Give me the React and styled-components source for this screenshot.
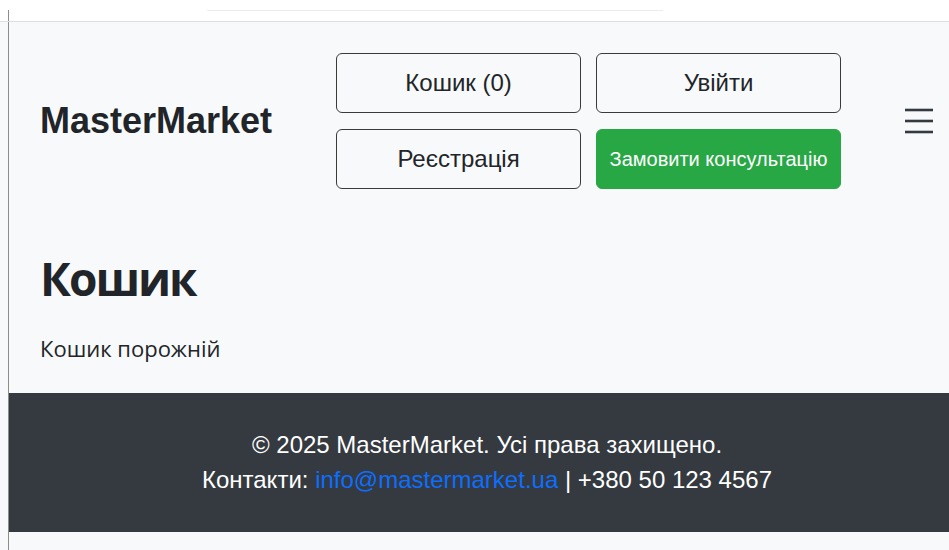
import React from 'react';
import styled, { createGlobalStyle } from 'styled-components';

const GlobalStyle = createGlobalStyle`
  html, body {
    margin: 0;
    padding: 0;
    background: #f8f9fa;
  }
  * {
    box-sizing: border-box;
  }
`;

const Page = styled.div`
  display: flex;
  flex-direction: column;
  min-height: 550px;
  background: #f8f9fa;
`;

const TopBand = styled.div`
  display: flex;
  align-items: flex-start;
  flex: none;
  height: 22px;
  padding-top: 10px;
  background: #fff;
  border-bottom: 1px solid #dcdfe2;
`;

const Edge = styled.div`
  width: 1px;
  height: 11px;
  margin-left: 8px;
  background: #8d8d8d;
`;

const FaintRule = styled.div`
  width: 456px;
  height: 1px;
  margin-left: 198px;
  background: #ececee;
`;

const Frame = styled.div`
  flex: 1;
  margin-left: 8px;
  border-left: 1px solid #8d8d8d;
  padding-bottom: 18px;
`;

const Header = styled.header`
  display: flex;
  align-items: center;
  justify-content: space-between;
  padding: 31px 16px 0 31px;
`;

const Logo = styled.div`
  font-family: "Liberation Sans", Arial, sans-serif;
  font-weight: 700;
  font-size: 36px;
  color: #212529;
`;

const ButtonGrid = styled.div`
  display: grid;
  grid-template-columns: 245px 245px;
  grid-auto-rows: 60px;
  column-gap: 15px;
  row-gap: 16px;
`;

const NavButton = styled.button`
  display: flex;
  align-items: center;
  justify-content: center;
  padding: 0;
  font-family: "Liberation Sans", Arial, sans-serif;
  font-size: ${p => (p.$accent ? '20px' : '24px')};
  color: ${p => (p.$accent ? '#fff' : '#212529')};
  background: ${p => (p.$accent ? '#28a745' : 'transparent')};
  border: ${p => (p.$accent ? '1.5px solid #28a745' : '1.5px solid #3a3a3a')};
  border-radius: 6px;
  cursor: pointer;
`;

const Burger = styled.button`
  display: flex;
  padding: 0;
  background: none;
  border: none;
  cursor: pointer;
`;

const Main = styled.main`
  padding: 62px 31px 28px;
`;

const Title = styled.h1`
  margin: 0 0 26px;
  font-family: "Open Sans", "Noto Sans", sans-serif;
  font-weight: 700;
  font-size: 46px;
  letter-spacing: -2px;
  line-height: 1.2;
  color: #212529;
`;

const Note = styled.p`
  margin: 0;
  font-family: "Open Sans", "Noto Sans", sans-serif;
  font-size: 22px;
  line-height: 1.5;
  color: #212529;
`;

const Footer = styled.footer`
  padding: 34px 0 35px 16px;
  background: #343a40;
  color: #fff;
  text-align: center;
  font-family: "Liberation Sans", Arial, sans-serif;
  font-size: 24px;
  line-height: 35px;
`;

const FooterLine = styled.p`
  margin: 0;
`;

const Mail = styled.a`
  color: #0d6efd;
  text-decoration: none;
`;

export default function App() {
  return (
    <Page>
      <GlobalStyle />
      <TopBand>
        <Edge />
        <FaintRule />
      </TopBand>
      <Frame>
        <Header>
          <Logo>MasterMarket</Logo>
          <ButtonGrid>
            <NavButton>Кошик (0)</NavButton>
            <NavButton>Увійти</NavButton>
            <NavButton>Реєстрація</NavButton>
            <NavButton $accent>Замовити консультацію</NavButton>
          </ButtonGrid>
          <Burger aria-label="Меню">
            <svg width="28" height="26" viewBox="0 0 28 26">
              <g stroke="#343a40" strokeWidth="2.6" strokeLinecap="butt">
                <line x1="0" y1="2" x2="28" y2="2" />
                <line x1="0" y1="13" x2="28" y2="13" />
                <line x1="0" y1="24" x2="28" y2="24" />
              </g>
            </svg>
          </Burger>
        </Header>
        <Main>
          <Title>Кошик</Title>
          <Note>Кошик порожній</Note>
        </Main>
        <Footer>
          <FooterLine>© 2025 MasterMarket. Усі права захищено.</FooterLine>
          <FooterLine>
            Контакти: <Mail href="mailto:info@mastermarket.ua">info@mastermarket.ua</Mail> | +380 50 123 4567
          </FooterLine>
        </Footer>
      </Frame>
    </Page>
  );
}
